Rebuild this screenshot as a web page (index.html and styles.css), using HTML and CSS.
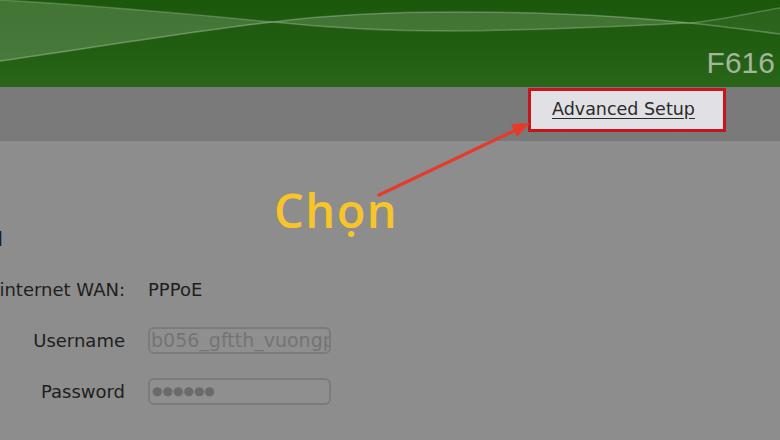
FILE: index.html
```html
<!DOCTYPE html>
<html>
<head>
<meta charset="utf-8">
<link rel="stylesheet" href="styles.css">
</head>
<body>
<div class="page">
  <header class="header">
    <svg class="waves" viewBox="0 0 780 87" preserveAspectRatio="none">
      <path d="M0,0 C90,5 200,15 273,22 C200,30 90,48 0,61 Z" fill="rgba(255,255,255,0.17)"/>
      <path d="M0,61 C90,48 200,30 273,22" stroke="rgba(255,255,255,0.28)" stroke-width="1.5" fill="none"/>
      <path d="M0,0 C90,5 200,15 273,22" stroke="rgba(255,255,255,0.2)" stroke-width="1.5" fill="none"/>
      <path d="M273,22 C350,12 450,10 560,14 C620,16 660,20 690,23 C620,26 560,30 450,31 C380,31 320,27 273,22 Z" fill="rgba(255,255,255,0.16)"/>
      <path d="M273,22 C350,12 450,10 560,14 C620,16 660,20 690,23 C720,26 750,30 780,34" stroke="rgba(255,255,255,0.25)" stroke-width="1.5" fill="none"/>
      <path d="M273,22 C320,27 380,31 450,31 C560,30 620,26 690,23 C720,20 750,13 780,8" stroke="rgba(255,255,255,0.22)" stroke-width="1.5" fill="none"/>
      <path d="M690,23 C720,20 750,13 780,8 L780,34 C750,30 720,26 690,23 Z" fill="rgba(255,255,255,0.06)"/>
    </svg>
    <div class="model">F616</div>
  </header>
  <nav class="nav">
    <a class="nav-btn" href="#">Advanced Setup</a>
  </nav>
  <main class="content">
    <div class="row heading-row">
      <div class="label"><span class="heading">Internet Connection Detail</span></div>
    </div>
    <div class="row">
      <div class="label">internet WAN:</div>
      <div class="value">PPPoE</div>
    </div>
    <div class="row">
      <div class="label">Username</div>
      <div class="input">b056_gftth_vuongpt</div>
    </div>
    <div class="row">
      <div class="label">Password</div>
      <div class="input pass">●●●●●●</div>
    </div>
  </main>
  <svg class="arrow" viewBox="0 0 780 440">
    <line x1="379" y1="195" x2="518" y2="129" stroke="#e63a2a" stroke-width="3.2" stroke-linecap="round"/>
    <polygon points="530,123 511,124 517,137" fill="#e63a2a"/>
  </svg>
  <div class="callout">Chọn</div>
</div>
</body>
</html>
```
FILE: styles.css
```css
html, body {
  margin: 0;
  padding: 0;
}
body {
  width: 780px;
  height: 440px;
  overflow: hidden;
  background: #8c8c8c;
  font-family: "DejaVu Sans", Verdana, sans-serif;
}
.page {
  position: relative;
  width: 780px;
  height: 440px;
  display: flex;
  flex-direction: column;
}
.header {
  position: relative;
  height: 87px;
  background: linear-gradient(180deg, #1c580c 0%, #215e12 55%, #2a661a 100%);
  display: flex;
  justify-content: flex-end;
  align-items: flex-end;
  padding-right: 5px;
  box-sizing: border-box;
  overflow: hidden;
}
.waves {
  position: absolute;
  left: 0;
  top: 0;
  width: 780px;
  height: 87px;
}
.model {
  position: relative;
  font-family: "Liberation Sans", Arial, sans-serif;
  font-size: 30px;
  line-height: 30px;
  color: #a4b59e;
  margin-bottom: 9px;
}
.nav {
  height: 54px;
  background: #7a7a7a;
  display: flex;
  justify-content: flex-end;
  align-items: flex-start;
  padding-right: 54px;
  padding-top: 1px;
  box-sizing: border-box;
}
.nav-btn {
  width: 198px;
  height: 44px;
  box-sizing: border-box;
  border: 3px solid #c4161c;
  background: #e1e0e4;
  color: #2a2a2a;
  font-family: "DejaVu Sans", Verdana, sans-serif;
  font-size: 17.5px;
  text-decoration: underline;
  text-underline-offset: 3px;
  display: flex;
  align-items: center;
  padding-left: 21px;
  padding-bottom: 2px;
}
.content {
  flex: 1;
  background: #8d8d8d;
  padding-top: 81px;
  display: flex;
  flex-direction: column;
}
.row {
  display: flex;
  align-items: center;
  gap: 23px;
  height: 51px;
}
.heading-row {
  height: 42px;
  align-items: flex-start;
}
.label {
  width: 125px;
  flex: none;
  display: flex;
  justify-content: flex-end;
  white-space: nowrap;
  font-size: 18px;
  color: #1e1e1e;
}
.heading-row .label {
  width: 3px;
}
.heading {
  font-size: 20px;
  margin-top: 5px;
  color: #1e1e1e;
}
.value {
  font-size: 18px;
  color: #1e1e1e;
}
.input {
  width: 183px;
  height: 27px;
  box-sizing: border-box;
  border: 2px solid #7b7b7b;
  border-radius: 6px;
  background: #8f8f8f;
  color: #747474;
  font-size: 19px;
  line-height: 23px;
  padding-left: 1px;
  white-space: nowrap;
  overflow: hidden;
}
.input.pass {
  color: #6a6a6a;
  font-size: 12px;
  letter-spacing: 0;
  padding-left: 2px;
}
.arrow {
  position: absolute;
  left: 0;
  top: 0;
  width: 780px;
  height: 440px;
  pointer-events: none;
}
.callout {
  position: absolute;
  left: 274px;
  top: 187px;
  font-family: "Open Sans", "Noto Sans", sans-serif;
  font-weight: 600;
  font-size: 47px;
  letter-spacing: 1.5px;
  line-height: 1;
  color: #f7c52a;
}
```
